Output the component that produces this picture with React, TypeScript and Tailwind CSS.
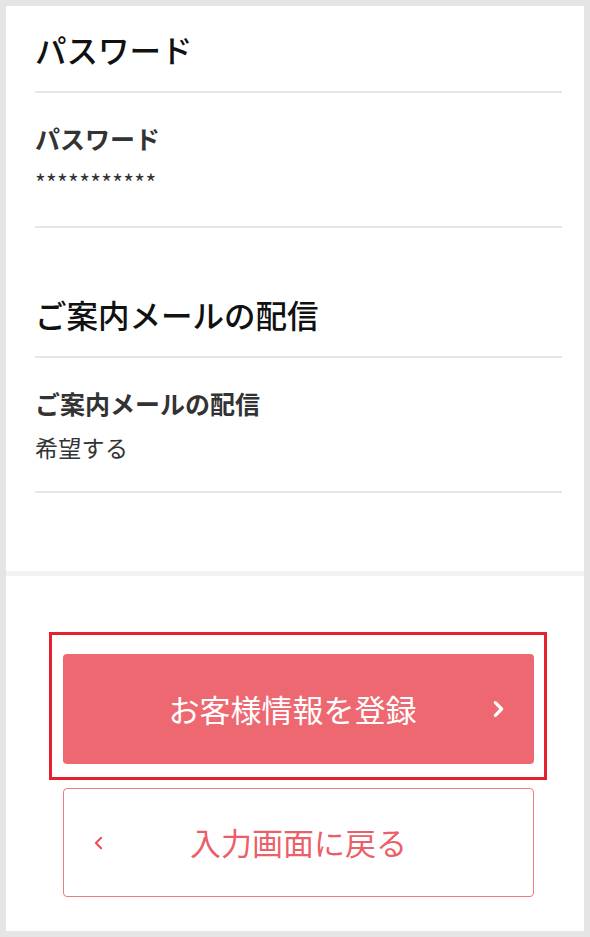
import React from "react";

const sections = [
  { title: "パスワード", label: "パスワード", value: "***********" },
  { title: "ご案内メールの配信", label: "ご案内メールの配信", value: "希望する" },
];

function Chevron({ dir, className }: { dir: "left" | "right"; className?: string }) {
  return (
    <svg viewBox="0 0 10 16" className={className} fill="none" stroke="currentColor" strokeLinecap="round" strokeLinejoin="round">
      {dir === "right" ? <path d="M2 2l6 6-6 6" /> : <path d="M8 2L2 8l6 6" />}
    </svg>
  );
}

export default function App() {
  return (
    <div
      className="w-[590px] h-[937px] bg-[#e5e5e5] p-[6px]"
      style={{ fontFamily: '"Noto Sans CJK JP", "Noto Sans", sans-serif' }}
    >
      <div className="h-full bg-white flex flex-col">
        {/* confirmation sections */}
        <div className="pl-[29px] pr-[22px]">
          {sections.map((s, idx) => (
            <div key={idx} className={idx > 0 ? "pt-[43px]" : ""}>
              <h2 className="pt-[23px] pb-[22px] text-[31.5px] leading-[40px] font-medium text-[#111]">
                {s.title}
              </h2>
              <div className="h-[2px] bg-[#e6e6e6]" />
              <div className="pt-[27px] pb-[28px]">
                <div className="text-[25px] leading-[36px] font-bold text-[#333]">{s.label}</div>
                <div className="mt-[10px] text-[23px] leading-[32px] text-[#333] tracking-[0.3px]">{s.value}</div>
              </div>
              <div className="h-[2px] bg-[#e6e6e6]" />
            </div>
          ))}
        </div>

        <div className="mt-[78px] h-[5px] bg-[#f2f2f2]" />

        {/* buttons */}
        <div className="pt-[56px]">
          <div className="ml-[43px] mr-[37px] border-[3px] border-[#e5212f] pt-[19px] pb-[13px] pl-[11px] pr-[10px]">
            <button className="relative w-full h-[110px] rounded-[4px] bg-[#ed6870] text-white text-[31px] flex items-center justify-center pr-[12px]">
              お客様情報を登録
              <Chevron dir="right" className="absolute right-[30px] top-1/2 -translate-y-1/2 w-[11px] h-[17px] stroke-[3]" />
            </button>
          </div>
          <div className="mt-[8px] ml-[57px] mr-[50px]">
            <button className="relative w-full h-[109px] rounded-[4px] border-[1.5px] border-[#ef7a80] bg-white text-[#ec5f68] text-[31px] flex items-center justify-center">
              <Chevron dir="left" className="absolute left-[30px] top-1/2 -translate-y-1/2 w-[9px] h-[14px] stroke-[2.2] text-[#ef4656]" />
              入力画面に戻る
            </button>
          </div>
        </div>
      </div>
    </div>
  );
}
